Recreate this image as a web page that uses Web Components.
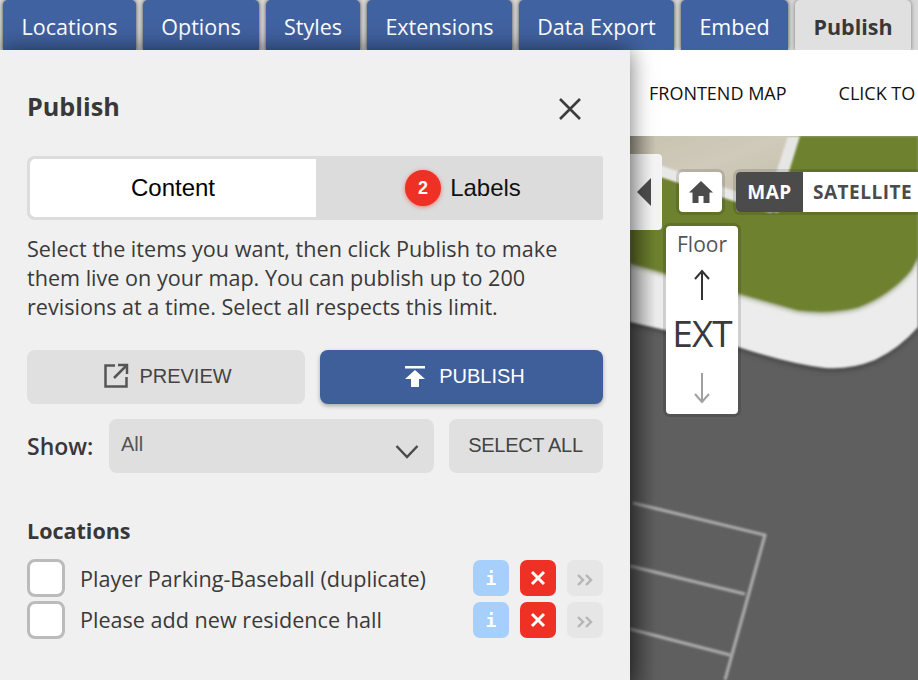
<!DOCTYPE html>
<html lang="en">
<head>
<meta charset="utf-8">
<title>Publish</title>
<style>
  html, body { margin: 0; height: 100%; overflow: hidden; background: #f0f0f0; }
  body { font-family: "Open Sans", sans-serif; }
</style>
</head>
<body>
<app-shell>
  <tab-bar slot="tabs">
    <tab-item style="--w: 133px">Locations</tab-item>
    <tab-item style="--w: 116px">Options</tab-item>
    <tab-item style="--w: 94px">Styles</tab-item>
    <tab-item style="--w: 145px">Extensions</tab-item>
    <tab-item style="--w: 155px">Data Export</tab-item>
    <tab-item style="--w: 107px">Embed</tab-item>
    <tab-item style="--w: 116px" active>Publish</tab-item>
  </tab-bar>
  <publish-panel slot="panel">
    <location-row>Player Parking-Baseball (duplicate)</location-row>
    <location-row>Please add new residence hall</location-row>
  </publish-panel>
  <map-view slot="map"></map-view>
</app-shell>

<script>
/**
 * Creates a template from a string of markup.
 *
 * @param {string} html the markup.
 * @returns {HTMLTemplateElement} the template.
 */
function tpl (html) {
  const template = document.createElement('template')
  template.innerHTML = html
  return template
}

/**
 * Base class, stamps a static template into an open shadow root.
 */
class Stamped extends HTMLElement {
  constructor () {
    super()
    this.attachShadow({ mode: 'open' })
    this.shadowRoot.appendChild(this.constructor.template.content.cloneNode(true))
  }
}

customElements.define('app-shell', class extends Stamped {
  static template = tpl(`
    <style>
      :host { display: grid; grid-template: 50px 630px / 630px 288px; width: 918px; height: 680px; overflow: hidden; }
      .tabs { grid-column: 1 / 3; }
      .panel { position: relative; z-index: 2; box-shadow: 0 0 22px rgba(0, 0, 0, .55); clip-path: inset(-30px -30px 0 0); }
      .panel, .map { min-height: 0; }
    </style>
    <div class="tabs"><slot name="tabs"></slot></div>
    <div class="panel"><slot name="panel"></slot></div>
    <div class="map"><slot name="map"></slot></div>
  `)
})

customElements.define('tab-bar', class extends Stamped {
  static template = tpl(`
    <style>
      :host { display: flex; gap: 7px; height: 50px; padding-left: 3px; background: #d8d8d8; overflow: hidden; }
    </style>
    <slot></slot>
  `)
})

customElements.define('tab-item', class extends Stamped {
  static template = tpl(`
    <style>
      :host {
        display: flex; align-items: center; justify-content: center;
        width: var(--w); height: 50px; padding-top: 3px; box-sizing: border-box;
        background: #4162a0; color: #fff; border-radius: 5px 5px 0 0;
        font: 400 21.5px "Open Sans", sans-serif;
        box-shadow: 0 0 4px rgba(0, 0, 0, .7);
      }
      :host([active]) { background: #e0e0e0; color: #383838; font-weight: 700; box-shadow: 0 0 4px rgba(0, 0, 0, .45); }
    </style>
    <slot></slot>
  `)
})

customElements.define('action-button', class extends Stamped {
  static template = tpl(`
    <style>
      :host {
        display: flex; align-items: center; justify-content: center; gap: 10px;
        height: 54px; box-sizing: border-box; padding: 0 0 2px 3px; border-radius: 8px;
        background: #e0e0e0; color: #444;
        font: 400 20px "Liberation Sans", Arial, sans-serif;
      }
      :host([primary]) { background: #3f5f9b; color: #fff; gap: 13px; padding-left: 6px; box-shadow: 0 2px 4px rgba(0, 0, 0, .3); }
    </style>
    <slot></slot>
  `)
})

customElements.define('segment-tabs', class extends Stamped {
  static template = tpl(`
    <style>
      :host { display: grid; grid-template-columns: 289px 287px; height: 64px; background: #dcdcdc; border-radius: 8px 2px 2px 8px; font: 400 24px "Liberation Sans", Arial, sans-serif; color: #000; }
      .seg { display: flex; align-items: center; justify-content: center; }
      .on { background: #fff; border: 3px solid #dcdcdc; border-right: 0; border-radius: 8px 0 0 8px; }
      .off { gap: 9px; padding-left: 7px; color: #111; }
      .badge {
        width: 36px; height: 36px; border-radius: 50%; background: #ee3124; color: #fff;
        display: flex; align-items: center; justify-content: center;
        font: 700 18px "Liberation Sans", Arial, sans-serif;
        box-shadow: 0 1px 4px rgba(238, 49, 36, .6);
      }
    </style>
    <div class="seg on">Content</div>
    <div class="seg off"><span class="badge">2</span><span>Labels</span></div>
  `)
})

customElements.define('location-row', class extends Stamped {
  static template = tpl(`
    <style>
      :host { display: flex; align-items: center; height: 42px; font-size: 21.6px; color: #3a3a3a; }
      :host(:last-child) .label { margin-top: -2px; }
      .check { width: 38px; height: 38px; box-sizing: border-box; background: #fff; border: 3px solid #bbb; border-radius: 8px; flex: none; }
      .label { flex: 1; margin-left: 15px; white-space: nowrap; }
      .acts { display: flex; gap: 11px; }
      .act { width: 36px; height: 36px; border-radius: 7px; display: flex; align-items: center; justify-content: center; }
      .info { background: #a6cffb; color: #fff; font: 700 18px "DejaVu Sans Mono", monospace; }
      .del { background: #ee3124; }
      .more { background: #e6e6e6; }
    </style>
    <span class="check"></span>
    <span class="label"><slot></slot></span>
    <span class="acts">
      <span class="act info">i</span>
      <span class="act del"><svg width="16" height="16" viewBox="0 0 16 16"><path d="M2 2l12 12M14 2L2 14" stroke="#fff" stroke-width="3" fill="none"/></svg></span>
      <span class="act more"><svg width="18" height="14" viewBox="0 0 18 14" style="margin-top:3px"><path d="M2 2l5 5-5 5M10 2l5 5-5 5" stroke="#b5b5b5" stroke-width="2.400" fill="none"/></svg></span>
    </span>
  `)
})

customElements.define('publish-panel', class extends Stamped {
  static template = tpl(`
    <style>
      :host { display: block; height: 630px; box-sizing: border-box; padding: 38px 27px 0; background: #f0f0f0; color: #383838; font-family: "Open Sans", sans-serif; }
      header { display: flex; align-items: center; justify-content: space-between; height: 38px; }
      h1 { margin: -1px 0 1px; font-size: 25.2px; font-weight: 700; line-height: 38px; }
      header svg { margin: 4px 21px 0 0; }
      segment-tabs { margin-top: 30px; }
      p { margin: 14px 0 0; font-size: 21.6px; line-height: 29px; color: #3a3a3a; white-space: nowrap; }
      .actions { display: grid; grid-template-columns: 278px 283px; gap: 15px; margin-top: 29px; }
      .show { display: grid; grid-template-columns: 67px 325px 154px; column-gap: 15px; align-items: center; margin-top: 15px; }
      .show label { font-size: 23px; font-weight: 600; white-space: nowrap; }
      .select { display: flex; justify-content: space-between; height: 54px; box-sizing: border-box; padding: 14px 15px 0 12px; border-radius: 8px; background: #dfdfdf; color: #555; font: 400 20px "Liberation Sans", Arial, sans-serif; }
      .select svg { margin-top: 11px; }
      .all { letter-spacing: -.3px; margin-right: 4px; }
      h2 { margin: 44px 0 0; font-size: 21.5px; font-weight: 700; line-height: 28px; }
      .rows { margin-top: 12px; }
    </style>
    <header>
      <h1>Publish</h1>
      <svg width="24" height="24" viewBox="0 0 24 24"><path d="M2 2l20 20M22 2L2 22" stroke="#3c3c3c" stroke-width="2.600" fill="none"/></svg>
    </header>
    <segment-tabs></segment-tabs>
    <p>Select the items you want, then click Publish to make<br>them live on your map. You can publish up to 200<br>revisions at a time. Select all respects this limit.</p>
    <div class="actions">
      <action-button>
        <svg width="26" height="26" viewBox="0 0 26 26"><path d="M12 2.500H2.500v21h21V14M15 2h9v9M23.500 2.500L11 15" stroke="#555" stroke-width="2.500" fill="none"/></svg>
        PREVIEW
      </action-button>
      <action-button primary>
        <svg width="22" height="22" viewBox="0 0 22 22"><path d="M1 1h20v2.500H1zM11 5l10 9h-6v8H7v-8H1z" fill="#fff"/></svg>
        PUBLISH
      </action-button>
    </div>
    <div class="show">
      <label>Show:</label>
      <div class="select">
        <span>All</span>
        <svg width="24" height="15" viewBox="0 0 24 15"><path d="M1.500 2l10.500 11L22.500 2" stroke="#4a4a4a" stroke-width="2.500" fill="none"/></svg>
      </div>
      <action-button><span class="all">SELECT ALL</span></action-button>
    </div>
    <h2>Locations</h2>
    <div class="rows"><slot></slot></div>
  `)
})

customElements.define('map-view', class extends Stamped {
  static template = tpl(`
    <style>
      :host { display: flex; flex-direction: column; width: 288px; height: 630px; overflow: hidden; font-family: "Open Sans", sans-serif; }
      .head { display: flex; align-items: center; gap: 52px; height: 86px; flex: none; padding: 0 0 0 19px; background: #fff; color: #111; font-size: 18px; white-space: nowrap; }
      .canvas { position: relative; flex: 1; background: #5f5f5f; }
      .canvas > svg { position: absolute; inset: 0; display: block; }
      .toggle {
        position: absolute; left: 0; top: 18px; width: 32px; height: 76px; border-radius: 0 4px 4px 0;
        background: linear-gradient(90deg, #d4d4d4, #f4f4f4 70%); display: flex; align-items: center; padding-left: 7px; box-sizing: border-box;
      }
      .home, .layers, .floor { position: absolute; background: #fff; border-radius: 4px; box-shadow: 0 0 0 3px rgba(0, 0, 0, .12); }
      .home { left: 49px; top: 36px; width: 43px; height: 40px; display: flex; align-items: center; justify-content: center; }
      .layers { left: 106px; top: 36px; width: 200px; height: 40px; display: flex; overflow: hidden; font-size: 19px; font-weight: 700; color: #4b4b4b; letter-spacing: .5px; }
      .layers span { display: flex; align-items: center; padding: 0 10px; }
      .layers .on { width: 67px; box-sizing: border-box; justify-content: center; padding: 0; background: #4b4b4b; color: #fff; }
      .floor { left: 36px; top: 90px; width: 72px; height: 188px; display: flex; flex-direction: column; align-items: center; color: #555; }
      .floor .lbl { font-size: 21px; line-height: 28px; margin-top: 4px; }
      .floor .lvl { font-size: 37px; line-height: 50px; color: #3a3a3a; letter-spacing: -1px; margin: 7px 0 14px; }
      .floor svg { display: block; }
      .floor .up { margin-top: 11px; }
    </style>
    <div class="head"><span>FRONTEND MAP</span><span>CLICK TO</span></div>
    <div class="canvas">
      <svg width="288" height="544" viewBox="630 136 288 544">
        <defs>
          <filter id="soft" x="-5%" y="-5%" width="110%" height="110%"><feGaussianBlur stdDeviation=".8"/></filter>
          <filter id="shade" x="-10%" y="-10%" width="120%" height="120%"><feGaussianBlur stdDeviation="2.500"/></filter>
          <linearGradient id="beige" x1="0" y1="0" x2="1" y2="1"><stop offset="0" stop-color="#c8c2b0"/><stop offset=".5" stop-color="#d0cabb"/><stop offset="1" stop-color="#c4bea9"/></linearGradient>
          <linearGradient id="edge" x1="0" x2="1"><stop offset="0" stop-color="#000" stop-opacity=".3"/><stop offset="1" stop-color="#000" stop-opacity="0"/></linearGradient>
        </defs>
        <rect x="630" y="136" width="288" height="544" fill="#5f5f5f"/>
        <path d="M630 322L738 347Q790 364 825 368Q850 370 875 360Q900 348 918 327V136H630Z" fill="#3a3a3a" opacity=".7" filter="url(#shade)" transform="translate(0 3)"/>
        <path d="M630 322L738 347Q790 364 825 368Q850 370 875 360Q900 348 918 327V136H630Z" fill="#ececec" filter="url(#soft)"/>
        <path d="M630 263L665 273L738 293L798 310Q830 314 858 307Q890 295 911 270L918 257V136H630Z" fill="#56662a" opacity=".6" filter="url(#shade)" transform="translate(0 2)"/>
        <path d="M630 263L665 273L738 293L798 310Q830 314 858 307Q890 295 911 270L918 257V136H630Z" fill="#6e812d" filter="url(#soft)"/>
        <path d="M630 136H800L788 175L778 213L630 166Z" fill="#e6e6e4" filter="url(#soft)"/>
        <path d="M630 136H788L777 170Q772 182 755 192L735 191L630 155Z" fill="url(#beige)" filter="url(#soft)"/>
        <path d="M630 155L661 167L732 192L775 206L771 213L730 200L661 177L630 165Z" fill="#e8e8e6" filter="url(#soft)"/>
        <g stroke="#aeaeae" stroke-width="3" fill="none" filter="url(#soft)">
          <path d="M633 503L765 535L725 680"/>
          <path d="M630 566L745 594"/>
          <path d="M630 629L730 655"/>
        </g>
        <rect x="630" y="136" width="26" height="544" fill="url(#edge)"/>
      </svg>
      <div class="toggle"><svg width="14" height="28" viewBox="0 0 14 28"><path d="M14 0v28L0 14z" fill="#4b4b4b"/></svg></div>
      <div class="home"><svg width="24" height="22" viewBox="0 0 24 22"><path d="M12 0L0 11.500h3.500V22h6v-7h5v7h6V11.500H24z" fill="#4b4b4b"/></svg></div>
      <div class="layers"><span class="on">MAP</span><span>SATELLITE</span></div>
      <div class="floor">
        <span class="lbl">Floor</span>
        <svg class="up" width="16" height="32" viewBox="0 0 16 32"><path d="M8 31V2M1 10L8 2l7 8" stroke="#333" stroke-width="2" fill="none"/></svg>
        <span class="lvl">EXT</span>
        <svg width="16" height="32" viewBox="0 0 16 32"><path d="M8 1v29M1 22l7 8 7-8" stroke="#a0a0a0" stroke-width="2" fill="none"/></svg>
      </div>
    </div>
  `)
})
</script>
</body>
</html>
